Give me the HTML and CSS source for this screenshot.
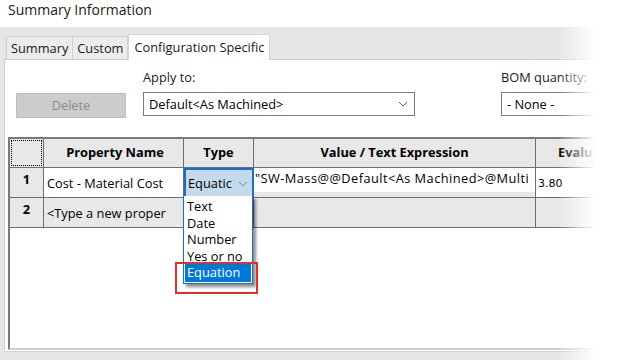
FILE: index.html
```html
<!DOCTYPE html>
<html>
<head>
<meta charset="utf-8">
<link rel="stylesheet" href="styles.css">
</head>
<body>
<div class="title">Summary Information</div>
<div class="dialog">
  <div class="tabs">
    <div class="tab">Summary</div>
    <div class="tab">Custom</div>
    <div class="tab active">Configuration Specific</div>
  </div>
  <div class="panel">
    <div class="controls">
      <div class="btn">Delete</div>
      <div class="group apply">
        <div class="label">Apply to:</div>
        <div class="select wide">Default&lt;As Machined&gt;<svg class="chev" width="10" height="6" viewBox="0 0 10 6"><path d="M1 1l4 4 4-4" fill="none" stroke="#606060" stroke-width="1"/></svg></div>
      </div>
      <div class="group bom">
        <div class="label">BOM quantity:</div>
        <div class="select narrow">- None -</div>
      </div>
    </div>
    <div class="grid">
      <div class="row head">
        <div class="c num corner"><span class="focus"></span></div>
        <div class="c prop">Property Name</div>
        <div class="c type">Type</div>
        <div class="c val">Value / Text Expression</div>
        <div class="c eval">Evalua</div>
      </div>
      <div class="row">
        <div class="c num">1</div>
        <div class="c prop white">Cost - Material Cost</div>
        <div class="c type sel">Equatic<svg class="chev2" width="10" height="6" viewBox="0 0 10 6"><path d="M1 1l4 4 4-4" fill="none" stroke="#7a8a9a" stroke-width="1"/></svg></div>
        <div class="c val"><span class="valtext">"SW-Mass@@Default&lt;As Machined&gt;@Multi</span></div>
        <div class="c eval small">3.80</div>
      </div>
      <div class="row">
        <div class="c num">2</div>
        <div class="c prop">&lt;Type a new proper</div>
        <div class="c type"></div>
        <div class="c val"></div>
        <div class="c eval"></div>
      </div>
      <div class="rest"></div>
    </div>
  </div>
</div>
<div class="list">
  <div class="item">Text</div>
  <div class="item">Date</div>
  <div class="item">Number</div>
  <div class="item cut">Yes or no</div>
  <div class="item hi">Equation</div>
</div>
<div class="redbox"></div>
<div class="fade"></div>
</body>
</html>
```
FILE: styles.css
```css
* { box-sizing: border-box; }
html, body { margin: 0; padding: 0; }
body {
  width: 640px;
  height: 360px;
  overflow: hidden;
  background: #fff;
  font-family: "Open Sans", "Noto Sans", sans-serif;
  font-size: 12.8px;
  color: #000;
  position: relative;
}
.title {
  height: 27px;
  padding-left: 8px;
  font-size: 14px;
  line-height: 19px;
  color: #1a1a1a;
}
.dialog {
  background: #e6e6e6;
  height: 333px;
  padding: 0 0 0 4px;
  display: flex;
  flex-direction: column;
  overflow: hidden;
}
.tabs {
  display: flex;
  align-items: flex-end;
  height: 32px;
  padding-left: 2px;
  flex-shrink: 0;
}
.tab {
  height: 23px;
  padding: 0 4px;
  border: 1px solid #d0d0d0;
  border-bottom: none;
  margin-right: -1px;
  line-height: 22px;
  color: #1a1a1a;
  background: #ececec;
  flex-shrink: 0;
}
.tab.active {
  height: 26px;
  background: #fff;
  padding: 0 5px;
  margin-left: 1px;
  line-height: 24px;
  position: relative;
  top: 1px;
  z-index: 1;
  border-color: #d4d4d4;
}
.panel {
  background: #fff;
  border: 1px solid #d0d0d0;
  height: 293px;
  width: 620px;
  display: flex;
  flex-direction: column;
  padding: 0 0 0 2px;
  flex-shrink: 0;
  overflow: hidden;
}
.controls {
  display: flex;
  align-items: flex-end;
  height: 56px;
  flex-shrink: 0;
}
.controls > * { flex-shrink: 0; }
.btn {
  width: 110px;
  height: 25px;
  margin-left: 9px;
  margin-bottom: -2px;
  background: #cccccc;
  border: 1px solid #bfbfbf;
  color: #8a8a8a;
  text-align: center;
  line-height: 23px;
}
.group { display: flex; flex-direction: column; }
.apply { margin-left: 17px; }
.bom { margin-left: 86px; }
.label { height: 22px; line-height: 14px; color: #1a1a1a; white-space: nowrap; }
.select {
  height: 24px;
  border: 1px solid #7a7a7a;
  padding: 0 5px;
  line-height: 21px;
  display: flex;
  justify-content: space-between;
  align-items: center;
  white-space: nowrap;
}
.select.wide { width: 272px; }
.select.narrow { width: 100px; border-right: none; }
.chev { margin-right: 1px; }
.grid {
  margin-top: 21px;
  margin-left: 1px;
  border-top: 2px solid #7a7a7a;
  border-left: 2px solid #7a7a7a;
  flex: 1;
  display: flex;
  flex-direction: column;
  margin-bottom: 1px;
  border-bottom: 2px solid #cfcfcf;
  overflow: hidden;
}
.row { display: flex; height: 30px; flex-shrink: 0; }
.head { height: 29px; }
.c {
  flex-shrink: 0;
  background: #e8e8e8;
  border-right: 1px solid #6e6e6e;
  border-bottom: 1px solid #6e6e6e;
  height: 100%;
  overflow: hidden;
  white-space: nowrap;
  position: relative;
}
.head .c {
  font-weight: bold;
  text-align: center;
  line-height: 27px;
}
.num { width: 34px; font-weight: bold; text-align: center; line-height: 22px; }
.prop { width: 140px; padding-left: 3px; line-height: 30px; }
.type { width: 70px; }
.val { width: 282px; }
.eval { width: 80px; border-right: none; }
.head .eval { text-align: left; padding-left: 22px; }
.corner .focus {
  position: absolute;
  left: 1px; top: 1px; right: 1px; bottom: 1px;
  border: 1px dotted #000;
}
.white { background: #fff; }
.sel {
  background: #c4d9ec;
  border: 2px solid #1a6fc4;
  padding-left: 2px;
  line-height: 25px;
  display: flex;
  justify-content: space-between;
  align-items: center;
}
.chev2 { margin-right: 4px; margin-top: 2px; flex-shrink: 0; }
.valtext {
  display: block;
  background: #fff;
  height: 24px;
  line-height: 20px;
  padding-left: 1px;
  letter-spacing: 0.45px;
}
.small { font-family: "DejaVu Sans", sans-serif; font-size: 11px; line-height: 32px; padding-left: 2px; background: #fff; }
.rest { flex: 1; background: #fff; }
.list {
  position: absolute;
  left: 183px;
  top: 196px;
  width: 70px;
  height: 88px;
  background: #fff;
  border: 1px solid #1a6fc4;
  border-top: none;
  padding: 2px 1px 0 1px;
  box-shadow: 3px 3px 3px rgba(0,0,0,0.45);
}
.item { height: 16.5px; line-height: 17px; padding-left: 2px; white-space: nowrap; }
.item.cut { height: 13px; overflow: hidden; line-height: 17px; }
.item.hi { background: #0078d7; color: #fff; height: 20px; line-height: 20px; margin-top: 1px; }
.redbox {
  position: absolute;
  left: 175px;
  top: 262px;
  width: 83px;
  height: 32px;
  border: 2px solid #e0302a;
}
.fade {
  position: absolute;
  left: 0; top: 27px; right: 0; bottom: 0;
  background: linear-gradient(to right, rgba(255,255,255,0) 558px, #fff 596px);
  pointer-events: none;
}
```
